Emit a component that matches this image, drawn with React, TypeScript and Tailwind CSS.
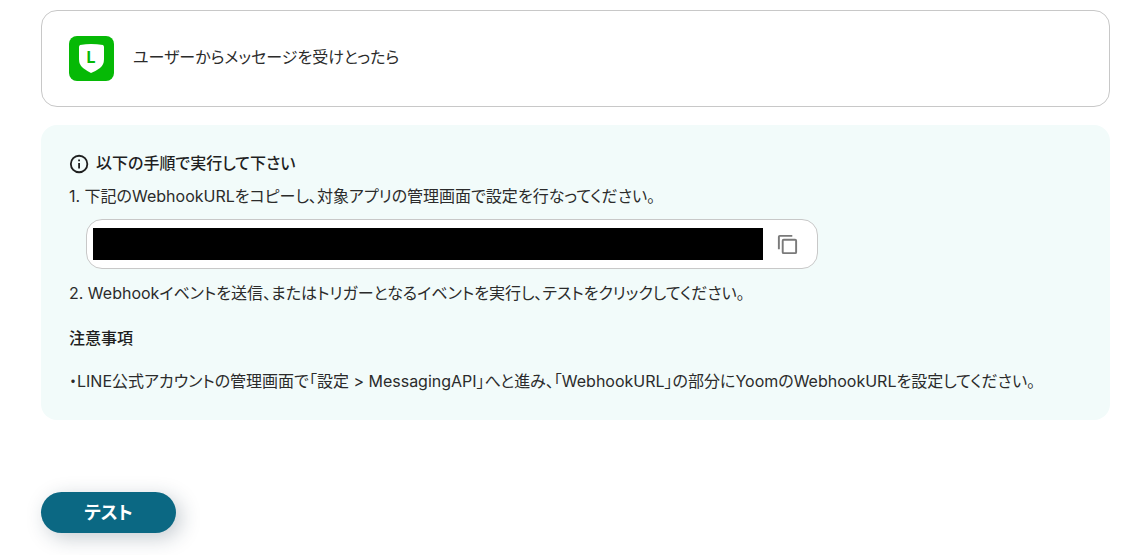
import type { ReactNode } from "react";

function LineOfficialIcon() {
  return (
    <svg className="size-[45px] shrink-0" viewBox="0 0 45 45" aria-hidden="true">
      <rect width="45" height="45" rx="8" fill="#06b906" />
      <path
        d="M10 11Q10 10 11 9Q17 8 22 8Q28 8 34 9Q35 10 35 11V23Q35 29 31 32Q27 35 22 37Q18 35 14 32Q10 29 10 23Z"
        fill="#fff"
      />
      <text
        x="22"
        y="27"
        textAnchor="middle"
        fontFamily="Inter, sans-serif"
        fontWeight="700"
        fontSize="16"
        fill="#06b906"
      >
        L
      </text>
    </svg>
  );
}

function InfoIcon() {
  return (
    <svg className="mt-px size-[22px] shrink-0" viewBox="0 0 24 24" fill="none" stroke="currentColor" strokeWidth="2" aria-hidden="true">
      <circle cx="11" cy="12" r="9" />
      <path d="M11 11v6M11 7v2" />
    </svg>
  );
}

function CopyIcon() {
  return (
    <svg className="size-[23px]" viewBox="0 0 24 24" fill="none" stroke="currentColor" strokeWidth="2" aria-hidden="true">
      <rect x="7" y="7" width="14" height="14" rx="1" />
      <path d="M3 17V4a1 1 0 0 1 1-1H17" />
    </svg>
  );
}

function Step({ children }: { children: ReactNode }) {
  return <p className="text-base leading-6">{children}</p>;
}

export default function App() {
  return (
    <main className="bg-white pt-[10px] pr-[21px] pb-[22px] pl-[41px] font-['Inter','Noto_Sans_CJK_JP',sans-serif] text-[#2b2b2b] [font-feature-settings:'palt']">
      <section className="flex items-start gap-[19px] rounded-2xl border border-[#c8c8c8] px-[27px] py-[25px]">
        <LineOfficialIcon />
        <p className="pt-[9px] text-base leading-6">ユーザーからメッセージを受けとったら</p>
      </section>

      <section className="mt-[18px] rounded-2xl bg-[#f2fbfa] px-7 pt-[26px] pb-[27px]">
        <h2 className="flex items-center gap-[5px] text-base leading-6 font-medium text-[#1f1f1f]">
          <InfoIcon />
          以下の手順で実行して下さい
        </h2>

        <div className="mt-[9px]">
          <Step>1. 下記のWebhookURLをコピーし、対象アプリの管理画面で設定を行なってください。</Step>
        </div>

        <div className="mt-[11px] ml-[17px] flex h-[50px] max-w-[732px] items-center rounded-2xl border border-[#c8c8c8] bg-white pl-[6px]">
          <input
            type="text"
            readOnly
            aria-label="WebhookURL"
            className="h-8 min-w-0 flex-1 bg-black text-black outline-none"
          />
          <button type="button" aria-label="コピー" className="shrink-0 pr-[18px] pl-[13px] text-[#7a7a7a]">
            <CopyIcon />
          </button>
        </div>

        <div className="mt-3">
          <Step>2. Webhookイベントを送信、またはトリガーとなるイベントを実行し、テストをクリックしてください。</Step>
        </div>

        <h3 className="mt-[21px] text-base leading-6 font-medium text-[#1f1f1f]">注意事項</h3>

        <p className="mt-[19px] text-base leading-6">
          ・LINE公式アカウントの管理画面で「設定 &gt; MessagingAPI」へと進み、「WebhookURL」の部分にYoomのWebhookURLを設定してください。
        </p>
      </section>

      <button
        type="button"
        className="mt-[72px] block h-[41px] w-[135px] rounded-full bg-[#0b6883] text-lg leading-6 font-bold text-white shadow-[5px_5px_20px_rgba(27,50,70,0.25)]"
      >
        テスト
      </button>
    </main>
  );
}
